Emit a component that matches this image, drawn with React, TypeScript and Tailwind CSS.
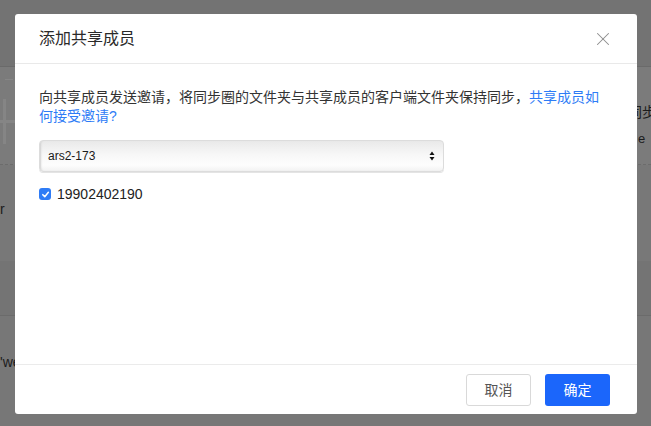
import { X } from "lucide-react";

const font = "font-['Liberation_Sans','Noto_Sans_CJK_SC',sans-serif]";

const Backdrop = () => (
  <div className="flex flex-col w-full h-full text-[#1c1c1c] text-[13px]">
    <div className="h-[67px] shrink-0 bg-[#737373] border-b border-[#6a6a6a]" />
    <div className="h-[98px] shrink-0 bg-[#7b7b7b] border-b border-dashed border-[#6c6c6c] flex justify-between">
      <div className="relative w-[40px] pt-[12px]">
        <div className="ml-[5px] w-[8px] h-px bg-[#868686]" />
        <div className="absolute left-[3px] top-[32px] w-[3px] h-[45px] bg-[#858585]" />
        <div className="absolute left-0 top-[53px] w-[20px] h-[3px] bg-[#858585]" />
      </div>
      <div className="w-[24px] pt-[35px] flex flex-col gap-[6px] whitespace-nowrap">
        <span className="text-[14px] ml-[1px]">同步</span>
        <span className="ml-[11px]">e</span>
      </div>
    </div>
    <div className="h-[96px] shrink-0 bg-[#787878] pt-[34px] pl-0">
      <span className="text-[14px]">r</span>
    </div>
    <div className="h-[55px] shrink-0 bg-[#747474] border-b border-[#6b6b6b]" />
    <div className="flex-1 bg-[#777777] pt-[36px] whitespace-nowrap">
      <span className="text-[14px]">'we</span>
    </div>
  </div>
);

const Checkbox = () => (
  <span className="w-[12px] h-[12px] rounded-[3px] bg-[#2f7cf6] flex items-center justify-center">
    <svg width="9" height="9" viewBox="0 0 10 10" fill="none">
      <path d="M2 5.2 L4.2 7.4 L8.2 2.6" stroke="white" strokeWidth="1.7" strokeLinecap="round" strokeLinejoin="round" />
    </svg>
  </span>
);

const SelectBox = () => (
  <div className="mt-[14px] w-[405px] h-[32px] rounded-[4px] border border-[#dcdcdc] bg-[linear-gradient(to_bottom,#e9e9e9,#f7f7f7_45%,#fdfdfd_80%,#f2f2f2)] shadow-[inset_2px_0_2px_-1px_#d0d0d0,0_1px_0_#e4e4e4] flex items-center justify-between pl-[8px] pr-[8px]">
    <span className="text-[12px] text-[#1a1a1a]">ars2-173</span>
    <svg width="6" height="10" viewBox="0 0 6 10">
      <path d="M3 0.5 L5.5 4 L0.5 4 Z" fill="#111" />
      <path d="M3 9.5 L5.5 6 L0.5 6 Z" fill="#111" />
    </svg>
  </div>
);

export default function App() {
  return (
    <div className={`relative w-[651px] h-[426px] overflow-hidden bg-[#777] ${font}`}>
      <Backdrop />
      <div className="absolute left-[15px] top-[14px] w-[622px] h-[400px] bg-white rounded-[3px] flex flex-col">
        <div className="h-[50px] shrink-0 border-b border-[#e9e9e9] flex items-center justify-between pl-6 pr-[23px]">
          <span className="text-[16px] text-[#2a2a2a]">添加共享成员</span>
          <X size={22} strokeWidth={1.1} className="text-[#8c8c8c]" />
        </div>
        <div className="flex-1 px-6 pt-6">
          <p className="whitespace-nowrap text-[14px] leading-[19px] text-[#333]">
            向共享成员发送邀请，将同步圈的文件夹与共享成员的客户端文件夹保持同步，
            <a href="#" className="text-[#2e7cf6]">
              共享成员如
              <br />
              何接受邀请?
            </a>
          </p>
          <SelectBox />
          <label className="mt-[12px] h-[20px] flex items-center gap-[6px]">
            <Checkbox />
            <span className="text-[14px] text-[#222]">19902402190</span>
          </label>
        </div>
        <div className="h-[50px] shrink-0 border-t border-[#ebebeb] flex justify-end items-start pt-[9px] pr-[27px] gap-[14px]">
          <button className="w-[65px] h-[32px] rounded-[3px] border border-[#d9d9d9] bg-white text-[14px] text-[#555]">
            取消
          </button>
          <button className="w-[65px] h-[32px] rounded-[3px] bg-[#1b66fb] text-[14px] text-white">
            确定
          </button>
        </div>
      </div>
    </div>
  );
}
